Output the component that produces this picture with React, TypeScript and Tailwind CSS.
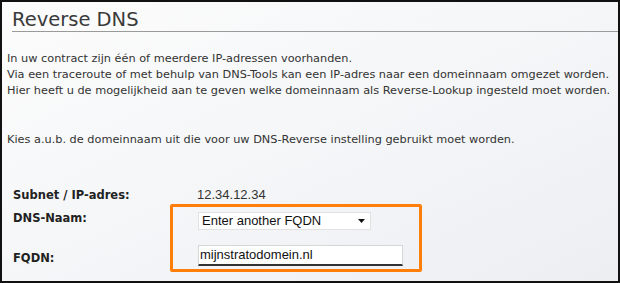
import React from "react";

export default function App() {
  return (
    <div className="relative w-[620px] h-[283px] overflow-hidden border-2 border-[#111] bg-gradient-to-br from-[#fcfcfc] via-[#f5f6f8] to-[#eceef2] font-['DejaVu_Sans',sans-serif] text-[#333]">
      <div className="ml-[10px] mt-[6px] h-[24px] border-b border-[#9a9a9a] text-[19.5px] leading-[23px] text-[#3a3a3a]">
        Reverse DNS
      </div>
      <div className="ml-[5px] mt-[19px] text-[11.3px] leading-[16px]">
        <p>In uw contract zijn één of meerdere IP-adressen voorhanden.</p>
        <p>Via een traceroute of met behulp van DNS-Tools kan een IP-adres naar een domeinnaam omgezet worden.</p>
        <p>Hier heeft u de mogelijkheid aan te geven welke domeinnaam als Reverse-Lookup ingesteld moet worden.</p>
        <p className="mt-[33px]">Kies a.u.b. de domeinnaam uit die voor uw DNS-Reverse instelling gebruikt moet worden.</p>
      </div>
      <div className="ml-[11px] mt-[38px] text-[11.5px] leading-[16px]">
        <div className="flex h-[18px] items-center">
          <div className="w-[184px] font-bold text-[#222]">Subnet / IP-adres:</div>
          <div className="font-['Liberation_Sans',sans-serif] text-[13px] text-[#333]">12.34.12.34</div>
        </div>
        <div className="flex h-[30px] items-start">
          <div className="mt-[6px] w-[185px] font-bold text-[#222]">DNS-Naam:</div>
          <div className="mt-[8px] flex h-[18px] w-[173px] items-center justify-between border border-[#e2e2e2] bg-white pl-[3px] pr-[5px] font-['Liberation_Sans',sans-serif] text-[13px] text-[#111]">
            <span>Enter another FQDN</span>
            <svg width="7" height="4" viewBox="0 0 7 4">
              <path d="M0 0H7L3.5 4Z" fill="#111" />
            </svg>
          </div>
        </div>
        <div className="flex h-[37px] items-start">
          <div className="mt-[16px] w-[185px] font-bold text-[#222]">FQDN:</div>
          <div className="mt-[11px] flex h-[21px] w-[205px] items-center border border-b-2 border-[#d6d6d6] border-b-[#333] bg-white pl-[1px] font-['Liberation_Sans',sans-serif] text-[13px] text-[#111]">
            mijnstratodomein.nl
          </div>
        </div>
      </div>
      <div className="absolute left-[168px] top-[202px] h-[68px] w-[252px] rounded-[2px] border-[3px] border-[#ff7f0a]" />
    </div>
  );
}
